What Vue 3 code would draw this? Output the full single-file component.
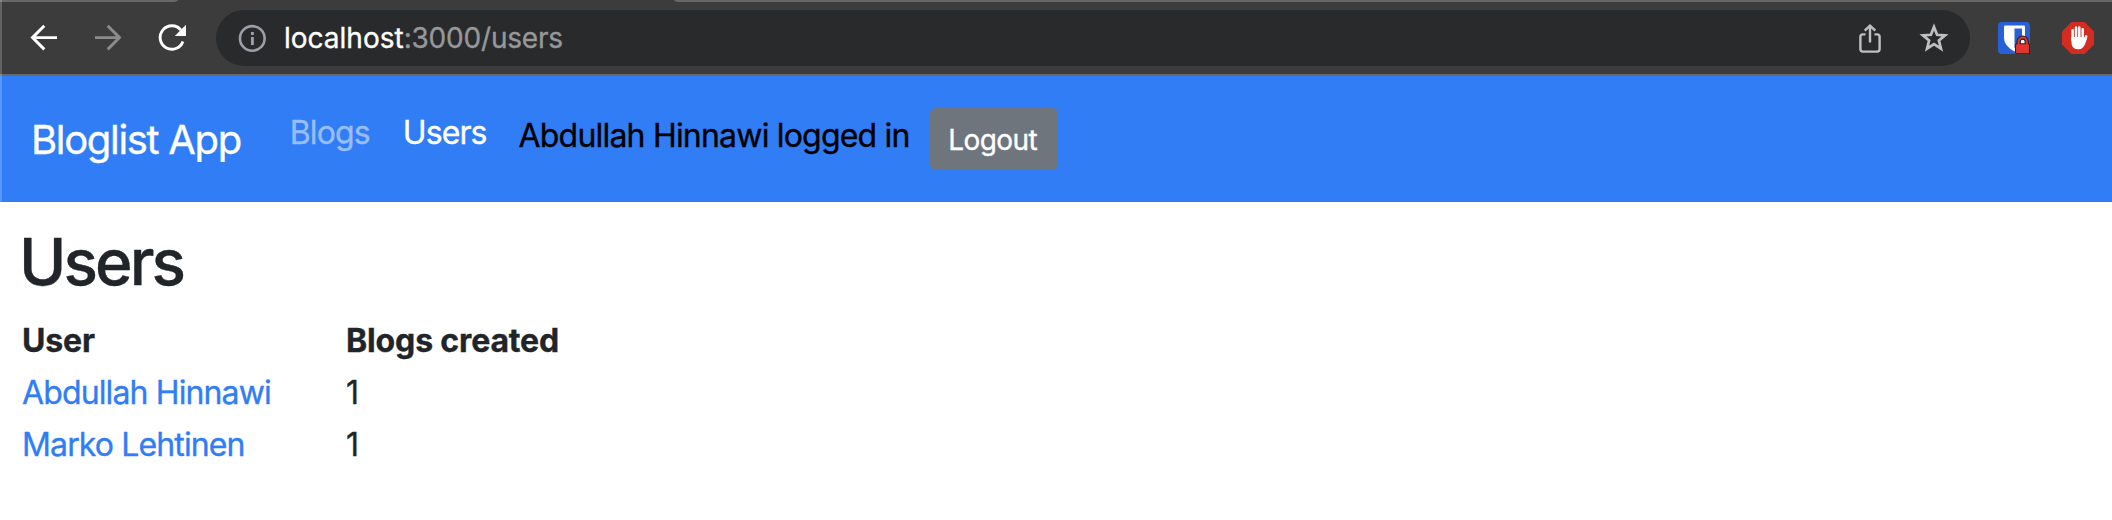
<script setup>
const users = [
  { name: 'Abdullah Hinnawi', blogs: 1 },
  { name: 'Marko Lehtinen', blogs: 1 }
]
</script>

<template>
  <div class="window">
    <header class="browser">
      <div class="tabs"><span class="tab-left"></span><span class="tab-right"></span></div>
      <div class="toolbar">
        <div class="controls">
          <svg class="icon" viewBox="0 0 32 32" fill="none" stroke="#fff" stroke-width="2.9">
            <path d="M29 15.6H5M16.3 3.8L4.5 15.6L16.3 27.4" />
          </svg>
          <svg class="icon" viewBox="0 0 32 32" fill="none" stroke="#8c8c8c" stroke-width="2.9">
            <path d="M3 15.6H27M15.7 3.8L27.5 15.6L15.7 27.4" />
          </svg>
          <svg class="icon" viewBox="0 0 32 32" fill="none">
            <path d="M25 8.2A11.7 11.7 0 1 0 26.9 19.4" stroke="#fff" stroke-width="2.9" />
            <path d="M30 2.8V14H18.8Z" fill="#fff" />
          </svg>
        </div>
        <div class="address">
          <svg class="icon" viewBox="0 0 32 32" fill="none">
            <circle cx="16.3" cy="16.4" r="12.3" stroke="#9aa0a6" stroke-width="2.6" />
            <path d="M16.4 15V23M16.4 10V12.9" stroke="#9aa0a6" stroke-width="2.9" />
          </svg>
          <div class="url"><span class="host">localhost</span><span class="path">:3000/users</span></div>
          <svg class="icon" viewBox="0 0 32 32" fill="none" stroke="#c0c0c0" stroke-width="2.4">
            <path d="M11.5 12.4H8.9Q6.4 12.4 6.4 14.9V27.1Q6.4 29.6 8.9 29.6H23.1Q25.6 29.6 25.6 27.1V14.9Q25.6 12.4 23.1 12.4H20.5" />
            <path d="M16 20.5V4M10.7 8.7L16 3.6L21.3 8.7" />
          </svg>
          <svg class="icon star" viewBox="0 0 32 32" fill="none" stroke="#c0c0c0" stroke-width="2.7">
            <path d="M16 5L19.1 12.8L27.1 13.3L20.9 18.5L23 26.7L16 22.2L9 26.7L11.1 18.5L4.9 13.3L12.9 12.8Z" />
          </svg>
        </div>
        <div class="extensions">
          <svg class="icon" viewBox="0 0 32 32">
            <rect width="32" height="32" rx="4" fill="#2860d8" />
            <path d="M6 4.4Q6 3.4 7 3.4H26Q27 3.4 27 4.4V16Q27 24 16.5 29.4Q6 24 6 16Z" fill="#fff" />
            <path d="M16.5 6.4H24V16Q24 21.5 16.5 25.9Z" fill="#2860d8" />
            <path d="M20.6 22V19.7A4.1 4.1 0 0 1 28.8 19.7V22" fill="#fff" stroke="#222" stroke-width="4.4" />
            <rect x="17" y="21.2" width="15" height="10.8" rx="1.5" fill="#222" />
            <path d="M20.6 23V19.7A4.1 4.1 0 0 1 28.8 19.7V23" fill="none" stroke="#df3531" stroke-width="2" />
            <rect x="18" y="22.2" width="13" height="9" rx=".8" fill="#df3531" />
          </svg>
          <svg class="icon" viewBox="0 0 32 32">
            <path d="M9.4 0H22.6L32 9.4V22.6L22.6 32H9.4L0 22.6V9.4Z" fill="#d22d20" />
            <g fill="none" stroke="#fff" stroke-width="2.5" stroke-linecap="round">
              <path d="M10.6 8.2V18M14 5.6V17M17.3 5.4V17M20.7 7.3V18M24.2 14.3L21.8 20" />
            </g>
            <path d="M9.4 15H21.9V18.5L25.2 14.3Q25.4 15.4 24.6 17.7Q22 27.2 17 27.2H15.5Q9.4 27.2 9.4 19.5Z" fill="#fff" />
          </svg>
        </div>
      </div>
    </header>

    <nav class="navbar">
      <a class="brand">Bloglist App</a>
      <a class="link muted">Blogs</a>
      <a class="link">Users</a>
      <span class="status">Abdullah Hinnawi logged in</span>
      <button class="logout" type="button">Logout</button>
    </nav>

    <main class="content">
      <h1>Users</h1>
      <table>
        <thead>
          <tr><th class="name">User</th><th>Blogs created</th></tr>
        </thead>
        <tbody>
          <tr v-for="user in users" :key="user.name">
            <td class="name"><a>{{ user.name }}</a></td>
            <td>{{ user.blogs }}</td>
          </tr>
        </tbody>
      </table>
    </main>
    <span class="edge"></span>
  </div>
</template>

<style>
body { margin: 0; background: #fff; }
</style>

<style scoped>
.window {
  position: relative;
  width: 2112px;
  height: 520px;
  overflow: hidden;
  background: #fff;
  color: #212529;
  font-family: Inter, "Liberation Sans", sans-serif;
  font-size: 32px;
  line-height: 48px;
  white-space: nowrap;
  -webkit-text-stroke: 0.35px currentColor;
}
.edge {
  position: absolute;
  left: 0;
  top: 0;
  width: 2px;
  height: 202px;
  background: rgba(255, 255, 255, 0.2);
}
.browser {
  box-sizing: border-box;
  height: 76px;
  background: #3c3c3c;
  border-bottom: 2px solid #686868;
}
.tabs { display: flex; justify-content: space-between; height: 2px; }
.tab-left { width: 178px; background: #686868; border-bottom-right-radius: 6px 2px; }
.tab-right { width: 1438px; background: #686868; border-bottom-left-radius: 6px 2px; }
.toolbar {
  display: flex;
  align-items: center;
  box-sizing: border-box;
  height: 72px;
  padding: 0 18px 0 28px;
}
.icon { display: block; flex: none; width: 32px; height: 32px; }
.controls, .extensions { display: flex; gap: 32px; }
.address {
  display: flex;
  flex: 1;
  align-items: center;
  box-sizing: border-box;
  height: 56px;
  margin: 0 28px;
  padding: 0 20px;
  border-radius: 28px;
  background: #292a2c;
}
.url { flex: 1; margin-left: 16px; font-size: 28px; }
.host { color: #fff; }
.path { color: #96989a; letter-spacing: -0.2px; }
.star { margin-left: 32px; }
.navbar {
  display: flex;
  align-items: flex-start;
  box-sizing: border-box;
  height: 126px;
  padding: 32px 31px 0;
  background: #317df6;
  color: #fff;
}
.brand { margin: 2px 49px 0 0; font-size: 40px; line-height: 60px; letter-spacing: -1.33px; }
.link { margin: 1px 33px 0 0; letter-spacing: -0.9px; }
.muted { color: #98befa; }
.status { margin: 4px 20px 0 -1px; color: #000; letter-spacing: -0.8px; }
.logout {
  width: 128px;
  height: 62px;
  padding: 2px 2px 0 0;
  border: 0;
  border-radius: 6px;
  background: #6e757d;
  color: #fff;
  font: 28px/42px Inter, "Liberation Sans", sans-serif;
  letter-spacing: -0.6px;
}
.content { padding: 22px 22px 0; }
h1 {
  margin: 0 0 0 -3px;
  font-size: 64px;
  line-height: 76px;
  font-weight: 500;
  letter-spacing: -2.9px;
}
table { margin-top: 15px; border-collapse: collapse; }
th, td { height: 52px; padding: 0; text-align: left; line-height: 48px; }
th { font-weight: 700; letter-spacing: -0.14px; }
.name { width: 324px; }
td a { color: #317df6; letter-spacing: -0.87px; }
</style>
